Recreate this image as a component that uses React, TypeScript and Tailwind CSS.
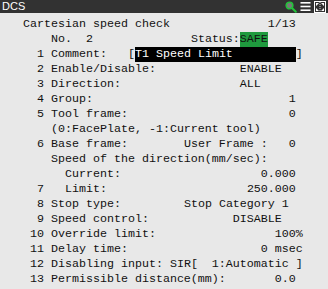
import React from "react";

type Seg = [number, string, string?];

const rows: Seg[][] = [
  [[3, "Cartesian speed check"], [38, "1/13"]],
  [[7, "No.  2"], [27, "Status:"], [34, "SAFE", "bg-[#1f9a3e]"]],
  [[5, "1 Comment:"], [18, "["], [19, "T1 Speed Limit         ", "bg-black text-white"], [42, "]"]],
  [[5, "2 Enable/Disable:"], [34, "ENABLE"]],
  [[5, "3 Direction:"], [34, "ALL"]],
  [[5, "4 Group:"], [41, "1"]],
  [[5, "5 Tool frame:"], [41, "0"]],
  [[7, "(0:FacePlate, -1:Current tool)"]],
  [[5, "6 Base frame:"], [26, "User Frame :"], [41, "0"]],
  [[7, "Speed of the direction(mm/sec):"]],
  [[9, "Current:"], [37, "0.000"]],
  [[5, "7"], [9, "Limit:"], [35, "250.000"]],
  [[5, "8 Stop type:"], [26, "Stop Category 1"]],
  [[5, "9 Speed control:"], [33, "DISABLE"]],
  [[4, "10 Override limit:"], [39, "100%"]],
  [[4, "11 Delay time:"], [37, "0 msec"]],
  [[4, "12 Disabling input:"], [24, "SIR[  1:Automatic ]"]],
  [[4, "13 Permissible distance(mm):"], [39, "0.0"]],
];

// each segment is placed at a fixed character column, like the pendant screen
const Row: React.FC<{ segs: Seg[] }> = ({ segs }) => {
  let col = 0;
  return (
    <div className="h-[15px] whitespace-pre">
      {segs.map(([at, text, cls], i) => {
        const pad = " ".repeat(Math.max(0, at - col));
        col = at + text.length;
        return (
          <React.Fragment key={i}>
            {pad}
            <span className={cls ? `${cls} inline-block h-[15px]` : undefined}>{text}</span>
          </React.Fragment>
        );
      })}
    </div>
  );
};

const TopIcons = () => (
  <div className="flex items-center gap-[3px] pr-[2px]">
    <svg width="12" height="12" viewBox="0 0 12 12">
      <circle cx="4.5" cy="4.5" r="3.3" fill="#7a7a7a" stroke="#22c33a" strokeWidth="1.6" />
      <line x1="7" y1="7" x2="10.8" y2="10.8" stroke="#22c33a" strokeWidth="2" strokeLinecap="round" />
    </svg>
    <svg width="11" height="11" viewBox="0 0 11 11">
      <rect x="0.5" y="1" width="10" height="1.6" fill="#fff" />
      <rect x="0.5" y="4.7" width="10" height="1.6" fill="#fff" />
      <rect x="0.5" y="8.4" width="10" height="1.6" fill="#fff" />
    </svg>
    <svg width="12" height="12" viewBox="0 0 12 12">
      <rect x="0.5" y="0.5" width="11" height="11" fill="none" stroke="#fff" strokeWidth="1" />
      <path d="M2 2h3L2 5z M10 2H7l3 3z M2 10h3L2 7z M10 10H7l3-3z" fill="#fff" />
      <line x1="6" y1="1" x2="6" y2="11" stroke="#fff" strokeWidth="0.8" strokeDasharray="1 1" />
    </svg>
  </div>
);

export default function App() {
  return (
    <div className="w-[328px] h-[289px] overflow-hidden bg-[#e8e8e8] flex flex-col">
      <div className="h-[13px] bg-[#323232] flex items-center justify-between">
        <span className="pl-[2px] text-white text-[11px] leading-[13px] font-['Liberation_Sans',Arial,sans-serif]">
          DCS
        </span>
        <TopIcons />
      </div>
      <div className="pl-[2px] pt-[4px] text-[11.67px] leading-[15px] text-[#111] font-['Liberation_Mono','Courier_New',monospace]">
        {rows.map((r, i) => (
          <Row key={i} segs={r} />
        ))}
      </div>
    </div>
  );
}
